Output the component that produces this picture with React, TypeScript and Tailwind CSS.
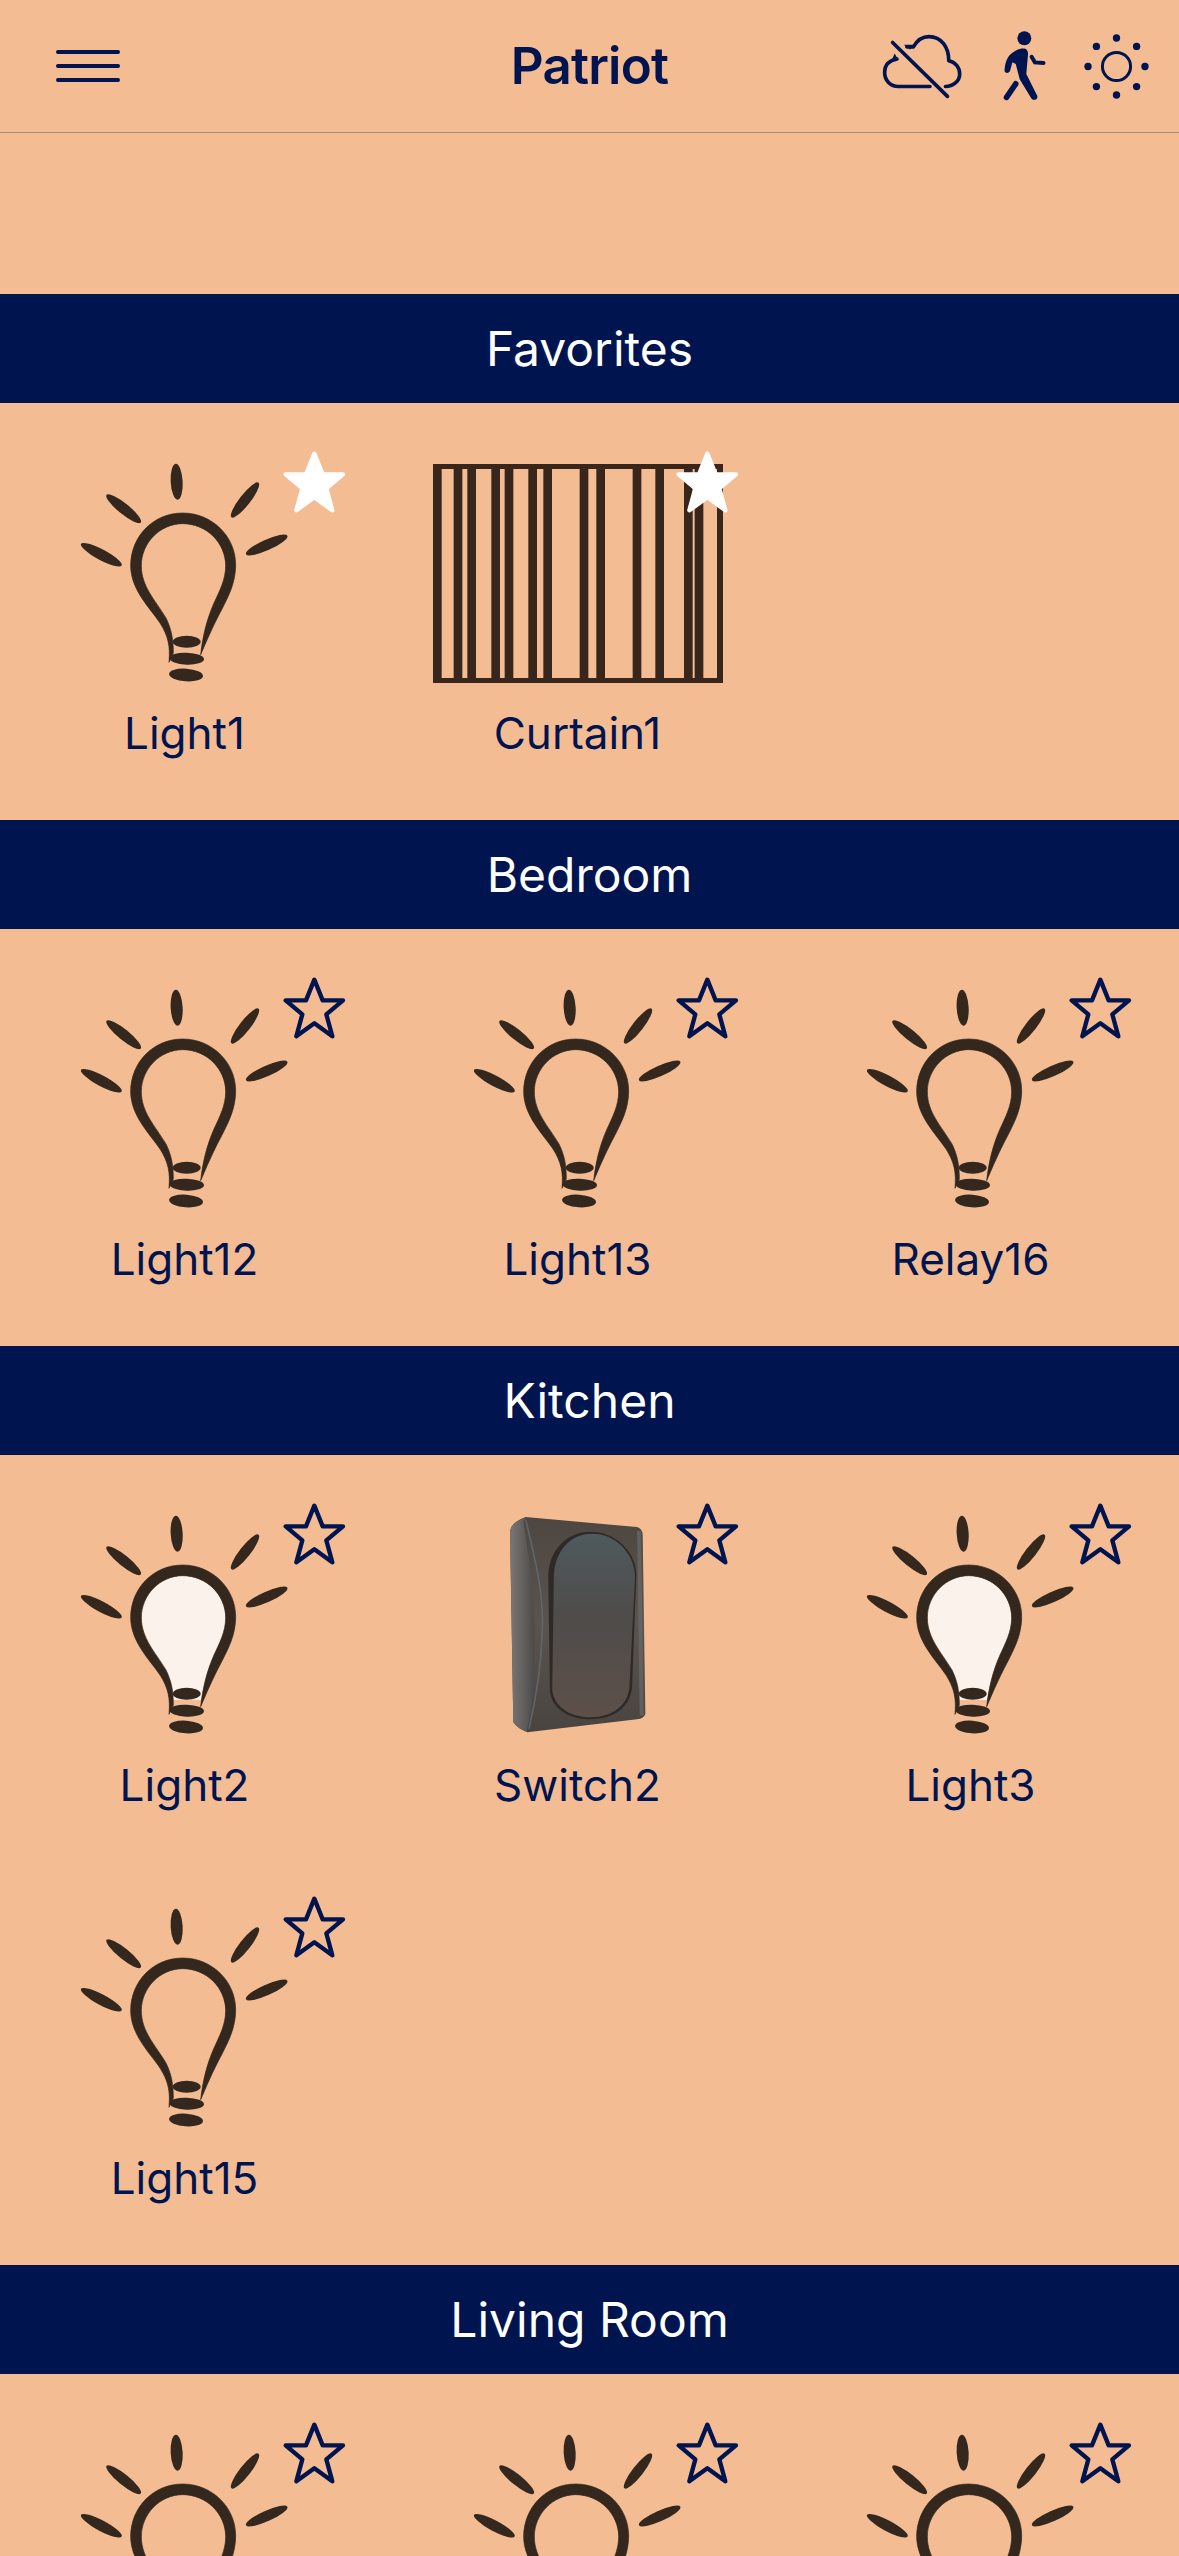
import { ReactNode } from 'react'

type Item = { name: string; kind: 'off' | 'on' | 'curtain' | 'switch'; fav?: boolean }
type Section = { title: string; items: Item[] }

const sections: Section[] = [
  {
    title: 'Favorites',
    items: [
      { name: 'Light1', kind: 'off', fav: true },
      { name: 'Curtain1', kind: 'curtain', fav: true },
    ],
  },
  {
    title: 'Bedroom',
    items: [
      { name: 'Light12', kind: 'off' },
      { name: 'Light13', kind: 'off' },
      { name: 'Relay16', kind: 'off' },
    ],
  },
  {
    title: 'Kitchen',
    items: [
      { name: 'Light2', kind: 'on' },
      { name: 'Switch2', kind: 'switch' },
      { name: 'Light3', kind: 'on' },
      { name: 'Light15', kind: 'off' },
    ],
  },
  {
    // labels of this row fall below the fold
    title: 'Living Room',
    items: [
      { name: '', kind: 'off' },
      { name: '', kind: 'off' },
      { name: '', kind: 'off' },
    ],
  },
]

const innerBulb =
  'M244 378 C244 310 300 252 368 252 C440 252 497 310 497 378 C497 420 480 455 462 490 C442 535 430 580 424 625 L340 625 C340 600 335 570 318 540 C292 495 248 440 244 378 Z'

function Bulb({ on }: { on?: boolean }) {
  const ink = '#33271e'
  return (
    <svg viewBox="60 70 630 660" className="w-[210px] h-[220px]">
      {on && <path d={innerBulb} fill="#fbf2ec" />}
      <path
        fill={ink}
        stroke={ink}
        strokeWidth="2"
        d="M327 668 C331 620 325 590 300 550 C270 505 212 450 212 378 C212 290 280 220 368 220 C456 220 527 290 527 375 C527 430 505 470 485 510 C458 560 437 610 422 645 C428 590 440 540 462 490 C478 455 497 420 497 378 C497 310 440 252 368 252 C300 252 244 310 244 378 C244 440 285 480 318 535 C335 570 340 600 340 640 Z"
      />
      <g fill={ink}>
        <ellipse cx="350" cy="126" rx="18" ry="54" transform="rotate(-3 350 126)" />
        <ellipse cx="191" cy="207" rx="66" ry="16" transform="rotate(39 191 207)" />
        <ellipse cx="124" cy="345" rx="69" ry="16" transform="rotate(28 124 345)" />
        <ellipse cx="555" cy="181" rx="66" ry="16" transform="rotate(-52 555 181)" />
        <ellipse cx="620" cy="316" rx="68" ry="16" transform="rotate(-24 620 316)" />
        <ellipse cx="380" cy="606" rx="42" ry="18" />
        <ellipse cx="380" cy="657" rx="52" ry="18" transform="rotate(2 380 657)" />
        <ellipse cx="378" cy="706" rx="51" ry="19" transform="rotate(4 378 706)" />
      </g>
    </svg>
  )
}

// x positions of the curtain slats, from the reference
const slats = [0, 62, 103, 175, 215, 286, 331, 440, 490, 599, 667, 753, 785, 852]

function Curtain() {
  return (
    <svg viewBox="0 0 870 657" className="w-[290px] h-[219px]">
      <g fill="#38261d">
        {slats.map((x) => (
          <rect key={x} x={x} y="0" width={x === 852 ? 18 : 26} height="657" />
        ))}
        <rect x="0" y="0" width="870" height="15" />
        <rect x="0" y="642" width="870" height="15" />
      </g>
    </svg>
  )
}

function WallSwitch() {
  return (
    <svg viewBox="85 105 415 655" className="w-[138px] h-[218px]">
      <defs>
        <linearGradient id="sw-body" x1="0" y1="0" x2="0" y2="1">
          <stop offset="0" stopColor="#4d4641" />
          <stop offset="0.5" stopColor="#5a534e" />
          <stop offset="1" stopColor="#4a4440" />
        </linearGradient>
        <linearGradient id="sw-rocker" x1="0" y1="0" x2="0" y2="1">
          <stop offset="0" stopColor="#4e5a5e" />
          <stop offset="0.45" stopColor="#4f4c4a" />
          <stop offset="1" stopColor="#5d5049" />
        </linearGradient>
        <linearGradient id="sw-side" x1="0" y1="0" x2="1" y2="0">
          <stop offset="0" stopColor="#7a7773" />
          <stop offset="1" stopColor="#4c4a49" />
        </linearGradient>
      </defs>
      <path
        fill="url(#sw-body)"
        d="M135 108 L470 138 Q485 142 487 160 L495 700 Q490 715 470 716 L140 755 Q112 745 98 725 L88 150 Q90 125 135 108 Z"
      />
      <path
        fill="url(#sw-side)"
        d="M135 110 Q90 125 88 150 L98 725 Q112 745 138 752 C165 640 165 500 160 400 C155 300 140 200 128 120 Z"
      />
      <path
        fill="none"
        stroke="#64707a"
        strokeWidth="5"
        opacity="0.7"
        d="M135 115 C165 240 190 340 185 450 C182 560 165 660 145 745"
      />
      <path fill="none" stroke="#6c6f70" strokeWidth="12" opacity="0.6" d="M476 150 L484 705" />
      <path
        fill="#2f2a28"
        d="M330 152 C260 152 205 205 203 285 L208 630 C212 680 260 716 330 716 C400 716 450 680 455 620 L468 280 C465 205 400 152 330 152 Z"
      />
      <path
        fill="url(#sw-rocker)"
        d="M335 158 C270 158 222 210 220 285 L215 625 C218 675 265 710 330 710 C395 710 442 675 447 620 L464 285 C460 210 400 158 335 158 Z"
      />
    </svg>
  )
}

function Star({ filled }: { filled?: boolean }) {
  return (
    <svg viewBox="665 35 195 195" className="absolute left-[282px] top-[47px] w-[65px] h-[65px]">
      <path
        d="M762 46 L787 108 L848 108 L798 150 L816 216 L762 177 L708 216 L726 150 L676 108 L737 108 Z"
        fill={filled ? '#ffffff' : 'none'}
        stroke={filled ? '#ffffff' : '#00144f'}
        strokeWidth="13"
        strokeLinejoin="round"
      />
    </svg>
  )
}

function Tile({ item }: { item: Item }) {
  let icon: ReactNode = <Bulb on={item.kind === 'on'} />
  if (item.kind === 'curtain') icon = <Curtain />
  if (item.kind === 'switch') icon = <WallSwitch />
  return (
    <div className="relative h-[369px] flex flex-col items-center pt-[60px]">
      <div className="h-[220px] flex items-center justify-center">{icon}</div>
      {item.name && (
        <span className="mt-[24px] text-[44px] leading-[52px] text-[#00144f]">{item.name}</span>
      )}
      <Star filled={item.fav} />
    </div>
  )
}

export default function App() {
  return (
    <div className="h-[2556px] w-full overflow-hidden bg-[#f3bc93] font-[Inter,sans-serif]">
      {/* Top bar */}
      <header className="h-[133px] border-b border-[#a98a74] flex items-center justify-between pl-[56px] pr-[29px] relative">
        <div className="flex flex-col gap-[10px] w-[64px]">
          <div className="h-[4px] rounded-full bg-[#00144f]" />
          <div className="h-[4px] rounded-full bg-[#00144f]" />
          <div className="h-[4px] rounded-full bg-[#00144f]" />
        </div>
        <h1 className="absolute left-0 right-0 text-center text-[51px] font-semibold text-[#00144f] tracking-[-0.8px]">
          Patriot
        </h1>
        <div className="flex items-center">
          <svg viewBox="70 40 245 195" className="w-[81px] h-[65px] mr-[39px]">
            <g fill="none" stroke="#00144f" strokeWidth="11" strokeLinecap="round" strokeLinejoin="round">
              <path d="M115 115 C90 120 78 135 78 155 C78 180 95 198 120 198 L215 198" />
              <path d="M145 78 L165 78 C178 55 195 47 212 47 C250 47 272 80 272 120 C292 124 305 140 305 160 C305 182 285 198 262 198" />
              <path d="M102 65 L268 228" />
            </g>
            <path d="M108 98 L120 118 L100 118 Z M136 72 L165 72 L155 86 Z" fill="#00144f" />
          </svg>
          <svg viewBox="425 30 135 212" className="w-[45px] h-[70px] mr-[36px]">
            <circle cx="492" cy="52" r="21" fill="#00144f" />
            <path
              fill="#00144f"
              d="M432 150 C434 125 440 108 455 97 C468 86 482 82 492 83 C500 84 504 92 503 102 L498 160 L531 226 C535 238 518 244 512 232 L478 176 L466 130 L456 125 L449 150 C447 160 432 160 432 150 Z"
            />
            <path d="M466 190 L438 231" stroke="#00144f" strokeWidth="17" strokeLinecap="round" />
            <path d="M514 108 L524 125 L550 127" fill="none" stroke="#00144f" strokeWidth="12" strokeLinecap="round" />
          </svg>
          <svg viewBox="670 38 200 200" className="w-[67px] h-[67px]">
            <circle cx="770" cy="138" r="42" fill="none" stroke="#00144f" strokeWidth="9" />
            <g fill="#00144f">
              <circle cx="770" cy="53" r="11" />
              <circle cx="830" cy="78" r="11" />
              <circle cx="855" cy="138" r="11" />
              <circle cx="830" cy="198" r="11" />
              <circle cx="770" cy="223" r="11" />
              <circle cx="710" cy="198" r="11" />
              <circle cx="685" cy="138" r="11" />
              <circle cx="710" cy="78" r="11" />
            </g>
          </svg>
        </div>
      </header>

      <div className="h-[161px]" />

      {sections.map((section) => (
        <section key={section.title}>
          <div className="h-[109px] bg-[#00144f] flex items-center justify-center text-[48px] text-white">
            {section.title}
          </div>
          <div className="grid grid-cols-3 gap-[24px] pr-[24px] pb-[48px]">
            {section.items.map((item, i) => (
              <Tile key={i} item={item} />
            ))}
          </div>
        </section>
      ))}
    </div>
  )
}
